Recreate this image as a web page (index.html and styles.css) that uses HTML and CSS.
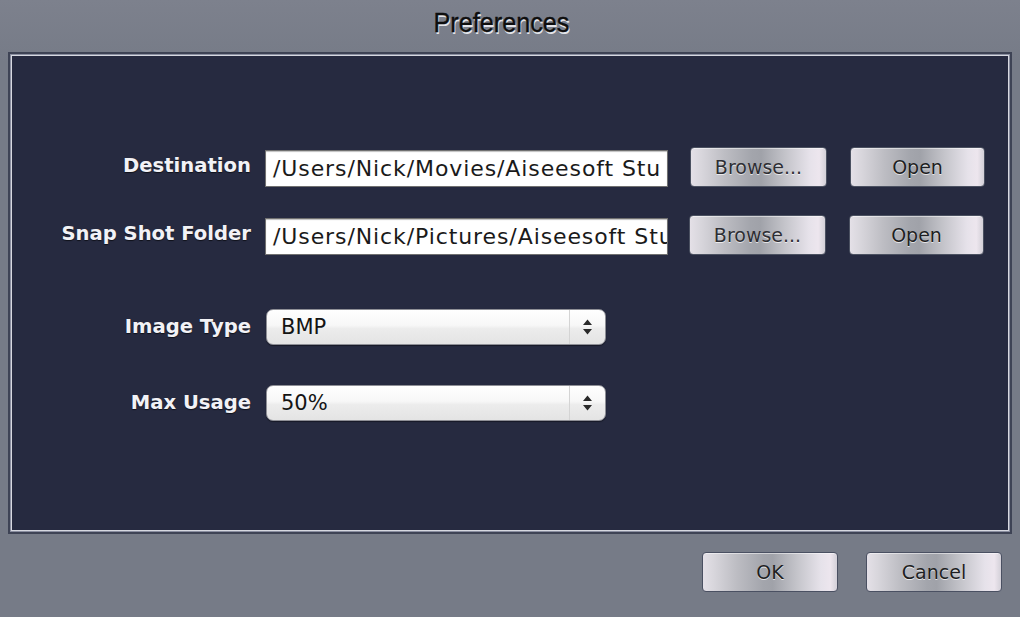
FILE: index.html
```html
<!DOCTYPE html>
<html>
<head>
<meta charset="utf-8">
<link rel="stylesheet" href="styles.css">
</head>
<body>
<div class="dialog">
  <div class="titlebar"><span class="title">Preferences</span></div>
  <div class="panel">
    <div class="row row-path">
      <label class="label">Destination</label>
      <div class="field">/Users/Nick/Movies/Aiseesoft Stu</div>
      <button class="btn btn-browse">Browse...</button>
      <button class="btn btn-open">Open</button>
    </div>
    <div class="row row-path row-second">
      <label class="label">Snap Shot Folder</label>
      <div class="field">/Users/Nick/Pictures/Aiseesoft Stu</div>
      <button class="btn btn-browse">Browse...</button>
      <button class="btn btn-open">Open</button>
    </div>
    <div class="row row-select row-third">
      <label class="label">Image Type</label>
      <div class="select">
        <span class="select-value">BMP</span>
        <span class="select-arrows">
          <svg width="11" height="18" viewBox="0 0 11 18"><path d="M5.5 1.5 L10 7 L1 7 Z M1 11 L10 11 L5.5 16.5 Z" fill="#2a2a2a"/></svg>
        </span>
      </div>
    </div>
    <div class="row row-select row-fourth">
      <label class="label">Max Usage</label>
      <div class="select">
        <span class="select-value">50%</span>
        <span class="select-arrows">
          <svg width="11" height="18" viewBox="0 0 11 18"><path d="M5.5 1.5 L10 7 L1 7 Z M1 11 L10 11 L5.5 16.5 Z" fill="#2a2a2a"/></svg>
        </span>
      </div>
    </div>
  </div>
  <div class="footer">
    <button class="btn btn-footer">OK</button>
    <button class="btn btn-footer">Cancel</button>
  </div>
</div>
</body>
</html>
```

FILE: styles.css
```css
html, body {
  margin: 0;
  padding: 0;
}
body {
  background: #777c88;
  font-family: "DejaVu Sans", Verdana, sans-serif;
  width: 1020px;
  height: 617px;
  overflow: hidden;
}
.dialog {
  width: 1020px;
  height: 617px;
  display: flex;
  flex-direction: column;
  background: linear-gradient(#7d818d, #767b87 10%, #767b87);
}
.titlebar {
  height: 52px;
  display: flex;
  justify-content: center;
  align-items: center;
}
.title {
  display: inline-block;
  font-family: "Liberation Sans", Arial, sans-serif;
  font-size: 28px;
  color: #0e0e0e;
  -webkit-text-stroke: 0.4px #0e0e0e;
  text-shadow: 1px 2px 0 #e4e5ea;
  transform: scaleX(0.9);
  margin-left: -18px;
  margin-top: -6px;
}
.panel {
  margin: 0 8px;
  border: 2px solid #3e4355;
  box-shadow: inset 0 0 0 1px #8a8ea0, inset 0 0 0 2px #d6d8e0;
  background: #262a40;
  padding-top: 92px;
  box-sizing: content-box;
  height: 386px;
}
.row {
  display: flex;
  align-items: center;
}
.label {
  width: 241px;
  text-align: right;
  font-weight: bold;
  font-size: 19.6px;
  color: #f2f2f6;
  text-shadow: 0 1px 1px rgba(0,0,0,0.6);
  margin-right: 14px;
  flex: none;
}
.row-path {
  height: 41px;
}
.row-path .label {
  margin-top: -3px;
}
.row-second {
  margin-top: 27px;
}
.field {
  height: 35px;
  margin-top: 4px;
  background: #fff;
  border: 1px solid #707070;
  box-shadow: inset 0 1px 1px rgba(0,0,0,0.25);
  font-size: 22px;
  letter-spacing: 0.9px;
  color: #1a1a1a;
  line-height: 35px;
  padding-left: 7px;
  white-space: nowrap;
  overflow: hidden;
  box-sizing: content-box;
  width: 394px;
  flex: none;
}
.btn {
  font-family: "DejaVu Sans", Verdana, sans-serif;
  font-size: 19px;
  color: #1e1e22;
  text-shadow: 0 1px 0 rgba(255,255,255,0.7);
  border: 1px solid #4b5161;
  border-radius: 4px;
  background: linear-gradient(90deg, #e4e0e7 0%, #d8d6dc 8%, #bdbdc3 25%, #a3a5ac 45%, #a0a2a9 52%, #c4c4ca 70%, #e6e2ea 88%, #ede6ee 95%, #d3d0d8 100%);
  box-shadow: inset 0 1px 0 rgba(255,255,255,0.5);
  padding: 0;
  height: 40px;
  flex: none;
  cursor: default;
}
.btn-browse {
  width: 137px;
  margin-left: 22px;
  color: #2e2e34;
}
.btn-open {
  width: 135px;
  margin-left: 23px;
}
.row-second .btn-browse {
  margin-left: 21px;
}
.row-select {
  height: 36px;
}
.row-third {
  margin-top: 54px;
}
.row-fourth {
  margin-top: 40px;
}
.row-select .label {
  margin-right: 15px;
  margin-top: -2px;
}
.select {
  width: 340px;
  height: 36px;
  box-sizing: border-box;
  border-radius: 7px;
  border: 1px solid #8e8f96;
  background: linear-gradient(#ffffff 0%, #f7f7f7 45%, #ececec 55%, #e4e4e4 100%);
  box-shadow: 0 1px 1px rgba(0,0,0,0.4);
  display: flex;
  align-items: center;
  flex: none;
}
.select-value {
  flex: 1;
  font-size: 21px;
  color: #141414;
  padding-left: 14px;
}
.select-arrows {
  width: 35px;
  height: 34px;
  border-left: 1px solid #d4d4d4;
  display: flex;
  align-items: center;
  justify-content: center;
}
.footer {
  display: flex;
  justify-content: flex-end;
  padding-top: 18px;
  padding-right: 18px;
}
.btn-footer {
  width: 136px;
  height: 40px;
  margin-left: 28px;
  border-color: #4a5062;
}
```
